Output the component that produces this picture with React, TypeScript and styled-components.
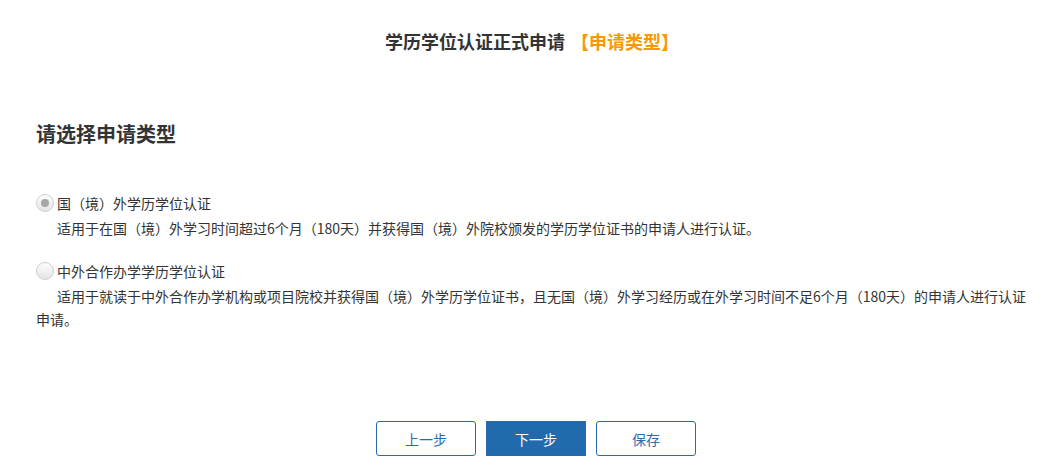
import React, { useState } from "react";
import styled, { createGlobalStyle } from "styled-components";

const GlobalStyle = createGlobalStyle`
  html, body {
    margin: 0;
    padding: 0;
    background: #fff;
  }
  body {
    font-family: "Microsoft YaHei", "Noto Sans CJK SC", "Noto Sans", sans-serif;
    color: #333;
  }
`;

const Page = styled.div`
  padding: 0 36px;
  width: 1064px;
  box-sizing: border-box;
`;

const Title = styled.h1`
  margin: 0;
  padding-top: 28px;
  text-align: center;
  font-size: 18px;
  line-height: 26px;
  font-weight: bold;
  color: #333;
`;

const Step = styled.span`
  color: #f59a00;
  margin-left: 6px;
`;

const Heading = styled.h2`
  margin: 65px 0 0;
  font-size: 20px;
  line-height: 30px;
  font-weight: bold;
  color: #333;
`;

const Options = styled.div`
  margin-top: 42px;
  display: flex;
  flex-direction: column;
  gap: 19px;
`;

const Option = styled.div`
  display: flex;
  flex-direction: column;
  gap: 2px;
`;

const Label = styled.label`
  display: flex;
  align-items: center;
  gap: 3px;
  height: 24px;
  font-size: 14px;
  color: #333;
  cursor: pointer;
`;

const Radio = styled.span<{ $checked: boolean }>`
  width: 18px;
  height: 18px;
  box-sizing: border-box;
  border-radius: 50%;
  border: 1px solid #cfcfcf;
  background: linear-gradient(#fdfdfd, #e4e4e4);
  display: flex;
  align-items: center;
  justify-content: center;

  &::after {
    content: "";
    width: 8px;
    height: 8px;
    border-radius: 50%;
    background: #a6a6a6;
    display: ${(p) => (p.$checked ? "block" : "none")};
  }
`;

const Desc = styled.p`
  margin: 0;
  font-size: 14px;
  line-height: 23px;
  text-indent: 21px;
  color: #333;
`;

const Actions = styled.div`
  margin-top: 90px;
  padding-left: 8px;
  display: flex;
  justify-content: center;
  gap: 10px;
`;

const Button = styled.button<{ $primary?: boolean }>`
  width: 100px;
  height: 35px;
  box-sizing: border-box;
  border: 1px solid #2a6bb0;
  border-radius: 3px;
  background: ${(p) => (p.$primary ? "#226aae" : "#fff")};
  color: ${(p) => (p.$primary ? "#fff" : "#2a6bb0")};
  border-radius: ${(p) => (p.$primary ? "0" : "3px")};
  font-family: inherit;
  font-size: 14px;
  cursor: pointer;
`;

const options = [
  {
    id: "abroad",
    label: "国（境）外学历学位认证",
    desc: "适用于在国（境）外学习时间超过6个月（180天）并获得国（境）外院校颁发的学历学位证书的申请人进行认证。",
  },
  {
    id: "joint",
    label: "中外合作办学学历学位认证",
    desc: "适用于就读于中外合作办学机构或项目院校并获得国（境）外学历学位证书，且无国（境）外学习经历或在外学习时间不足6个月（180天）的申请人进行认证申请。",
  },
];

export default function App() {
  const [selected, setSelected] = useState("abroad");

  return (
    <>
      <GlobalStyle />
      <Page>
        <Title>
          学历学位认证正式申请<Step>【申请类型】</Step>
        </Title>
        <Heading>请选择申请类型</Heading>
        <Options>
          {options.map((o) => (
            <Option key={o.id}>
              <Label onClick={() => setSelected(o.id)}>
                <Radio $checked={selected === o.id} />
                {o.label}
              </Label>
              <Desc>{o.desc}</Desc>
            </Option>
          ))}
        </Options>
        <Actions>
          <Button>上一步</Button>
          <Button $primary>下一步</Button>
          <Button>保存</Button>
        </Actions>
      </Page>
    </>
  );
}
